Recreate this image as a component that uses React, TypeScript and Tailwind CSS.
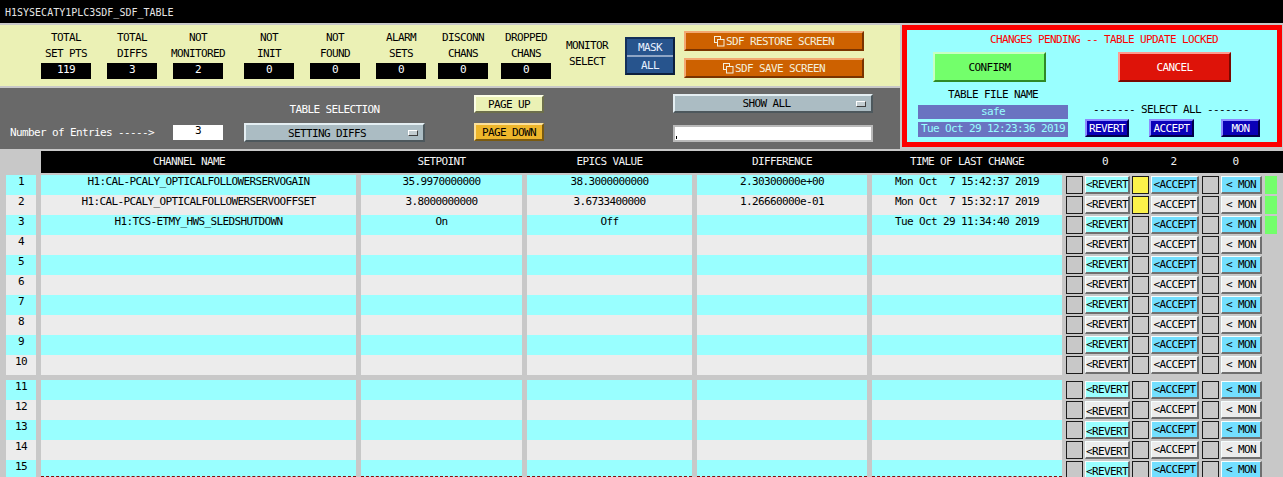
import React from "react";

type Entry = {
  ch: string;
  sp: string;
  ev: string;
  diff: string;
  time: string;
  accept: boolean;
  mon: boolean;
};

const ENTRIES: Entry[] = [
  {
    ch: "H1:CAL-PCALY_OPTICALFOLLOWERSERVOGAIN",
    sp: "35.9970000000",
    ev: "38.3000000000",
    diff: "2.30300000e+00",
    time: "Mon Oct  7 15:42:37 2019",
    accept: true,
    mon: true,
  },
  {
    ch: "H1:CAL-PCALY_OPTICALFOLLOWERSERVOOFFSET",
    sp: "3.8000000000",
    ev: "3.6733400000",
    diff: "1.26660000e-01",
    time: "Mon Oct  7 15:32:17 2019",
    accept: true,
    mon: true,
  },
  {
    ch: "H1:TCS-ETMY_HWS_SLEDSHUTDOWN",
    sp: "On",
    ev: "Off",
    diff: "",
    time: "Tue Oct 29 11:34:40 2019",
    accept: false,
    mon: true,
  },
];

const STATS: [string, string, string, string][] = [
  ["TOTAL", "SET PTS", "119", ""],
  ["TOTAL", "DIFFS", "3", "ml-[16px]"],
  ["NOT", "MONITORED", "2", "ml-[16px]"],
  ["NOT", "INIT", "0", "ml-[21px]"],
  ["NOT", "FOUND", "0", "ml-[16px]"],
  ["ALARM", "SETS", "0", "ml-[16px]"],
  ["DISCONN", "CHANS", "0", "ml-[12px]"],
  ["DROPPED", "CHANS", "0", "ml-[13px]"],
];

const rowBtn =
  "mt-[1px] h-[18px] flex items-center justify-center whitespace-pre border-t border-l border-r-2 border-b-2 border-t-[#f6ffff] border-l-[#f6ffff] border-r-[#6f6f6f] border-b-[#6f6f6f]";

const navyBtn =
  "h-[18px] bg-[#0a00b8] text-white flex items-center justify-center border-2 border-t-[#8c8cff] border-l-[#8c8cff] border-r-[#00004a] border-b-[#00004a]";

const dropdown =
  "flex items-center border-2 border-t-[#e4eef2] border-l-[#e4eef2] border-r-[#4d585d] border-b-[#4d585d] bg-[#abbcc3]";

function CopyIcon() {
  return (
    <svg width="11" height="11" viewBox="0 0 11 11" className="mr-[1px] shrink-0">
      <rect x="0.5" y="0.5" width="6" height="6" fill="none" stroke="#f3efdc" strokeWidth="1" />
      <rect x="3.5" y="3.5" width="6.5" height="6.5" fill="#cd6100" stroke="#f3efdc" strokeWidth="1" />
    </svg>
  );
}

function Indicator() {
  return (
    <div className="mr-[5px] w-[10px] h-[6px] border border-t-white border-l-white border-r-[#3f3f3f] border-b-[#3f3f3f] bg-[#c3cdd1]" />
  );
}

function StatsPanel() {
  return (
    <div className="h-[61px] bg-[#ebf1b5] flex items-start pl-[41px]">
      {STATS.map(([a, b, v, ml], i) => (
        <div key={i} className={`w-[50px] flex flex-col items-center ${ml}`}>
          <div className="pt-[5px] leading-[16px] text-center whitespace-nowrap">
            <div>{a}</div>
            <div>{b}</div>
          </div>
          <div className="mt-[1px] w-[50px] h-[16px] bg-black text-white text-center leading-[13px]">{v}</div>
        </div>
      ))}
      <div className="w-[72px] pt-[13px] leading-[16px] text-center">
        <div>MONITOR</div>
        <div>SELECT</div>
      </div>
      <div className="ml-[2px] mt-[12px] w-[50px] h-[38px] border-2 border-t-[#14305a] border-l-[#14305a] border-r-[#0d1f3d] border-b-[#0d1f3d] bg-[#8fa6c6] flex flex-col justify-between">
        <div className="h-[16px] bg-[#27548d] text-[#e8f0ff] flex items-center justify-center">MASK</div>
        <div className="h-[16px] bg-[#27548d] text-[#e8f0ff] flex items-center justify-center">ALL</div>
      </div>
      <div className="ml-[9px] flex flex-col">
        <div className="mt-[6px] w-[180px] h-[20px] bg-[#cd6100] text-[#f3efdc] flex items-center justify-center whitespace-pre border-2 border-t-[#f2a872] border-l-[#f2a872] border-r-[#7a3300] border-b-[#7a3300]">
          <CopyIcon />
          SDF RESTORE SCREEN
        </div>
        <div className="mt-[7px] w-[180px] h-[20px] bg-[#cd6100] text-[#f3efdc] flex items-center justify-center whitespace-pre border-2 border-t-[#f2a872] border-l-[#f2a872] border-r-[#7a3300] border-b-[#7a3300]">
          <CopyIcon />
          SDF SAVE SCREEN
        </div>
      </div>
    </div>
  );
}

function SelectionPanel() {
  return (
    <div className="h-[61px] bg-[#696969] flex items-start">
      <div className="pl-[10px] w-[173px] mt-[38px] text-white whitespace-pre">Number of Entries -----&gt;</div>
      <div className="mt-[37px] w-[50px] h-[15px] bg-white text-center leading-[11px]">3</div>
      <div className="ml-[21px] w-[181px] flex flex-col">
        <div className="mt-[15px] text-white text-center">TABLE SELECTION</div>
        <div className={`mt-[7px] h-[19px] ${dropdown}`}>
          <div className="flex-1 text-center pt-[2px]">SETTING DIFFS</div>
          <Indicator />
        </div>
      </div>
      <div className="ml-[49px] w-[70px] flex flex-col">
        <div className="mt-[7px] h-[18px] bg-[#ebf1b5] flex items-center justify-center whitespace-pre border-2 border-t-[#fbfde6] border-l-[#fbfde6] border-r-[#6d6f4c] border-b-[#6d6f4c]">
          PAGE UP
        </div>
        <div className="mt-[10px] h-[18px] bg-[#eeb62b] flex items-center justify-center whitespace-pre border-2 border-t-[#fbe09a] border-l-[#fbe09a] border-r-[#7a5a10] border-b-[#7a5a10]">
          PAGE DOWN
        </div>
      </div>
      <div className="ml-[129px] w-[200px] flex flex-col">
        <div className={`mt-[6px] h-[19px] ${dropdown}`}>
          <div className="flex-1 text-center pl-[2px]">SHOW ALL</div>
          <Indicator />
        </div>
        <div className="mt-[12px] h-[17px] bg-white border-2 border-[#b9b9b9] flex items-end pl-[1px] pb-[1px]">
          <div className="w-[1px] h-[3px] bg-black" />
        </div>
      </div>
    </div>
  );
}

function PendingPanel() {
  return (
    <div className="ml-[2px] w-[380px] h-[122px] border-[5px] border-[#fd0000] bg-[#99ffff] flex flex-col">
      <div className="mt-[3px] pl-[83px] text-[#fd0000] whitespace-pre">CHANGES PENDING -- TABLE UPDATE LOCKED</div>
      <div className="mt-[6px] flex">
        <div className="ml-[26px] w-[113px] h-[30px] bg-[#73ff6b] flex items-center justify-center border-2 border-t-[#c8ffc4] border-l-[#c8ffc4] border-r-[#2f8a27] border-b-[#2f8a27]">
          CONFIRM
        </div>
        <div className="ml-[72px] w-[113px] h-[30px] bg-[#de1309] text-white flex items-center justify-center border-2 border-t-[#ff9a90] border-l-[#ff9a90] border-r-[#7a0800] border-b-[#7a0800]">
          CANCEL
        </div>
      </div>
      <div className="flex">
        <div className="ml-[11px] w-[150px] flex flex-col">
          <div className="mt-[6px] text-center whitespace-pre">TABLE FILE NAME</div>
          <div className="mt-[4px] h-[14px] bg-[#6a73c1] text-[#99ffff] text-center">safe</div>
          <div className="mt-[3px] h-[15px] bg-[#6a73c1] text-[#99ffff] text-center whitespace-pre">Tue Oct 29 12:23:36 2019</div>
        </div>
        <div className="flex flex-col">
          <div className="mt-[21px] pl-[25px] whitespace-pre">------- SELECT ALL -------</div>
          <div className="mt-[3px] flex">
            <div className={`ml-[17px] w-[44px] ${navyBtn}`}>REVERT</div>
            <div className={`ml-[20px] w-[45px] ${navyBtn}`}>ACCEPT</div>
            <div className={`ml-[27px] w-[39px] ${navyBtn}`}>MON</div>
          </div>
        </div>
      </div>
    </div>
  );
}

function TableHeader() {
  return (
    <div className="mt-[2px] ml-[41px] h-[22px] bg-black text-[#f2f2f2] flex pt-[4px] whitespace-pre">
      <div className="w-[315px] pr-[19px] text-center">CHANNEL NAME</div>
      <div className="ml-[5px] w-[161px] text-center">SETPOINT</div>
      <div className="ml-[5px] w-[165px] text-center">EPICS VALUE</div>
      <div className="ml-[5px] w-[170px] text-center">DIFFERENCE</div>
      <div className="ml-[5px] w-[190px] text-center">TIME OF LAST CHANGE</div>
      <div className="w-[86px] text-center">0</div>
      <div className="w-[51px] text-center">2</div>
      <div className="w-[73px] text-center">0</div>
    </div>
  );
}

function Row({ n }: { n: number }) {
  const d = ENTRIES[n - 1];
  const cyan = n % 2 === 1;
  const bg = cyan ? "bg-[#99ffff]" : "bg-[#ececec]";
  const revertBg = cyan ? "bg-[#99ffff]" : "bg-[#ececec]";
  const actBg = cyan ? "bg-[#73dfff]" : "bg-[#ececec]";
  const cell = n === 15 ? "h-[17px] border-b border-dashed border-b-[#8b0a0a]" : "h-[20px]";
  const revertPad = n >= 12 ? "pt-[4px]" : "";
  const box = "mt-[1px] w-[17px] h-[18px] border border-[#1c1c1c]";
  return (
    <div className="flex h-[20px] items-start whitespace-pre">
      <div className={`ml-[6px] w-[30px] h-[20px] text-center ${bg}`}>{n}</div>
      <div className={`ml-[5px] w-[315px] text-center ${bg} ${cell}`}>{d?.ch}</div>
      <div className={`ml-[5px] w-[161px] text-center ${bg} ${cell}`}>{d?.sp}</div>
      <div className={`ml-[5px] w-[165px] text-center ${bg} ${cell}`}>{d?.ev}</div>
      <div className={`ml-[5px] w-[170px] text-center ${bg} ${cell}`}>{d?.diff}</div>
      <div className={`ml-[5px] w-[190px] text-center ${bg} ${cell}`}>{d?.time}</div>
      <div className={`ml-[4px] bg-[#c8c8c8] ${box}`} />
      <div className={`ml-[2px] w-[45px] ${rowBtn} ${revertBg} ${revertPad}`}>&lt;REVERT</div>
      <div className={`ml-[2px] ${box} ${d?.accept ? "bg-[#fbf34a]" : "bg-[#c8c8c8]"}`} />
      <div className={`ml-[2px] w-[48px] ${rowBtn} ${actBg}`}>&lt;ACCEPT</div>
      <div className={`ml-[3px] bg-[#c8c8c8] ${box}`} />
      <div className={`ml-[2px] w-[41px] ${rowBtn} ${actBg}`}>&lt; MON</div>
      {d?.mon ? <div className="ml-[3px] mt-[1px] w-[12px] h-[18px] bg-[#73ff6b]" /> : null}
    </div>
  );
}

export default function App() {
  const first = [1, 2, 3, 4, 5, 6, 7, 8, 9, 10];
  const second = [11, 12, 13, 14, 15];
  return (
    <div className="w-[1283px] h-[477px] overflow-hidden bg-[#c8c8c8] text-black font-['DejaVu_Sans_Mono',monospace] text-[11px] leading-[13px] tracking-[-0.62px]">
      <div className="h-[23px] bg-black text-[#e6e6e6] pl-[5px] pt-[7px] text-[10px] leading-[12px] tracking-[0px]">
        H1SYSECATY1PLC3SDF_SDF_TABLE
      </div>
      <div className="mt-[2px] flex h-[124px]">
        <div className="w-[900px] flex flex-col gap-[2px]">
          <StatsPanel />
          <SelectionPanel />
        </div>
        <PendingPanel />
      </div>
      <TableHeader />
      <div className="mt-[2px]">
        {first.map((n) => (
          <Row key={n} n={n} />
        ))}
      </div>
      <div className="mt-[5px]">
        {second.map((n) => (
          <Row key={n} n={n} />
        ))}
      </div>
    </div>
  );
}
